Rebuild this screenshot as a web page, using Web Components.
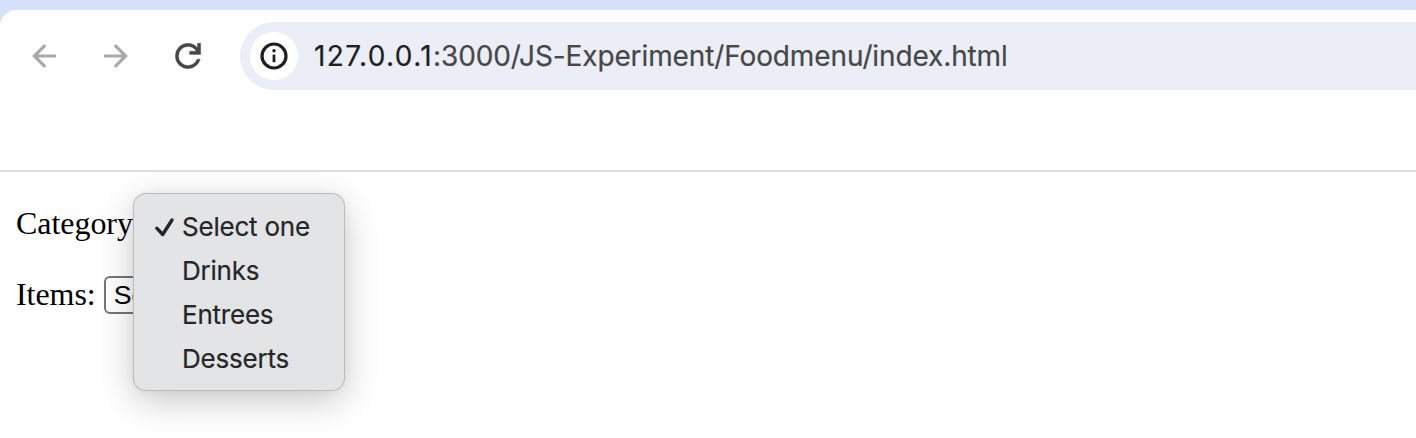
<!DOCTYPE html>
<html lang="en">
<head>
<meta charset="utf-8">
<title>Food menu</title>
<style>
  body { margin: 0; background: #fff; overflow: hidden; }
</style>
</head>
<body>
<browser-window>
  <browser-toolbar slot="toolbar">
    <url-field><span slot="host">127.0.0.1</span><span slot="path">:3000/JS-Experiment/Foodmenu/index.html</span></url-field>
  </browser-toolbar>
  <food-form></food-form>
</browser-window>

<script>
class ShadowElement extends HTMLElement {
  constructor() {
    super();
    this.attachShadow({ mode: 'open' }).innerHTML = this.constructor.markup;
  }
}

customElements.define('browser-window', class extends ShadowElement {
  static markup = `
    <style>
      :host { display: block; box-sizing: border-box; height: 438px; padding-top: 10px; background: #fff linear-gradient(#d6e1fb, #d6e1fb) 0 0 / 100% 30px no-repeat; }
      header { box-sizing: border-box; height: 162px; padding-top: 12px; background: #fff; border-bottom: 2px solid #dfdfe0; border-top-left-radius: 16px; }
      main { padding: 28px 16px 0; }
    </style>
    <header><slot name="toolbar"></slot></header>
    <main><slot></slot></main>`;
});

customElements.define('browser-toolbar', class extends ShadowElement {
  static markup = `
    <style>
      :host { display: flex; align-items: center; height: 68px; padding-left: 26px; }
      svg { display: block; flex: none; width: 36px; height: 36px; margin-right: 36px; }
      slot { display: block; flex: 1; }
      .arrow { fill: none; stroke: #a9a9a9; stroke-width: 3.2; }
      .reload { fill: #474747; stroke: #474747; stroke-width: 9; width: 38px; height: 38px; margin: 0 33px 0 -1px; }
    </style>
    <svg class="arrow" viewBox="0 0 36 36"><path d="M30 18H8M19.2 7.2 8.4 18l10.8 10.8"/></svg>
    <svg class="arrow" viewBox="0 0 36 36"><path d="M6 18h22M16.8 7.2 27.600 18 16.800 28.800"/></svg>
    <svg class="reload" viewBox="0 -960 960 960"><path d="M480-160q-134 0-227-93t-93-227q0-134 93-227t227-93q69 0 132 28.500T720-690v-110h80v280H520v-80h168q-32-56-87.500-88T480-720q-100 0-170 70t-70 170q0 100 70 170t170 70q77 0 139-44t87-116h84q-28 106-114 173t-196 67Z"/></svg>
    <slot></slot>`;
});

customElements.define('url-field', class extends ShadowElement {
  static markup = `
    <style>
      :host { display: flex; align-items: center; box-sizing: border-box; height: 68px; padding-left: 10px; border-radius: 34px 0 0 34px; background: #ebeef7; }
      svg { display: block; flex: none; width: 48px; height: 48px; margin-right: 16px; }
      .url { font: 28px/34px Inter, sans-serif; letter-spacing: -.12px; color: #474747; white-space: nowrap; -webkit-text-stroke: .2px currentColor; }
      .host { color: #1f1f1f; letter-spacing: 1.4px; }
    </style>
    <svg viewBox="0 0 48 48"><circle cx="24" cy="24" r="24" fill="#fff"/><circle cx="24" cy="24" r="12" fill="none" stroke="#1f1f1f" stroke-width="3.200"/><path d="M24 22.600v7.600" stroke="#1f1f1f" stroke-width="2.800"/><circle cx="24" cy="18.800" r="1.700" fill="#1f1f1f"/></svg>
    <div class="url"><span class="host"><slot name="host"></slot></span><slot name="path"></slot></div>`;
});

customElements.define('select-box', class extends ShadowElement {
  static markup = `
    <style>
      :host { display: inline-block; box-sizing: border-box; width: 54px; height: 38px; margin-top: 2px; padding-left: 8px; border: 2px solid #767676; border-radius: 6px; background: #fff; color: #000; font: 26.667px/34px "Liberation Sans", sans-serif; white-space: nowrap; }
    </style><slot></slot>`;
});

customElements.define('option-menu', class extends ShadowElement {
  static markup = `
    <style>
      :host { display: block; box-sizing: border-box; width: 210px; height: 196px; padding: 11px 0; border-radius: 12px; background: #e2e4e6; box-shadow: 0 0 0 1px #bcbcbe, 0 10px 36px rgba(0,0,0,.23), 0 0 10px rgba(0,0,0,.05); }
    </style><slot></slot>`;
});

customElements.define('menu-option', class extends ShadowElement {
  static markup = `
    <style>
      :host { display: flex; align-items: center; height: 44px; padding-left: 18px; color: #262626; font: 26px/32px Inter, sans-serif; letter-spacing: -.22px; white-space: nowrap; -webkit-text-stroke: .2px currentColor; }
      svg { display: block; width: 24px; height: 24px; margin-right: 6px; fill: none; stroke: currentColor; stroke-width: 3.400; stroke-linecap: round; stroke-linejoin: round; visibility: hidden; }
      :host([selected]) svg { visibility: visible; }
    </style>
    <svg viewBox="0 0 24 24"><path d="M4.800 13.200 10.700 19.500 20 5"/></svg><slot></slot>`;
});

customElements.define('food-form', class extends ShadowElement {
  static markup = `
    <style>
      :host { display: block; position: relative; color: #000; font: 32px/38px "Liberation Serif", serif; letter-spacing: -.05px; }
      .row { display: flex; align-items: center; height: 46px; gap: 8px; }
      .row + .row { margin-top: 25px; }
      option-menu { position: absolute; left: 118px; top: -6px; }
    </style>
    <div class="row">Category</div>
    <div class="row"><span>Items:</span><select-box>Se</select-box></div>
    <option-menu>
      <menu-option selected>Select one</menu-option>
      <menu-option>Drinks</menu-option>
      <menu-option>Entrees</menu-option>
      <menu-option>Desserts</menu-option>
    </option-menu>`;
});
</script>
</body>
</html>
